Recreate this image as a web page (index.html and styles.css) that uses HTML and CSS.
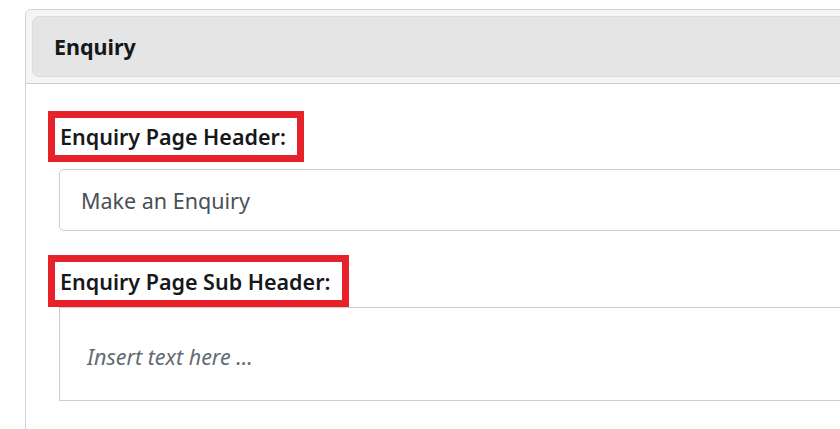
FILE: index.html
```html
<!DOCTYPE html>
<html>
<head>
<meta charset="utf-8">
<link rel="stylesheet" href="styles.css">
</head>
<body>
<div class="card">
  <div class="card-header">
    <div class="header-box"><span class="title">Enquiry</span></div>
  </div>
  <div class="card-body">
    <div class="field">
      <label class="label">Enquiry Page Header:</label>
      <div class="input">Make an Enquiry</div>
    </div>
    <div class="field">
      <label class="label label-tall">Enquiry Page Sub Header:</label>
      <div class="editor"><span class="placeholder">Insert text here ...</span></div>
    </div>
  </div>
</div>
</body>
</html>
```

FILE: styles.css
```css
html, body {
  margin: 0;
  padding: 0;
  background: #ffffff;
  overflow: hidden;
}
body {
  padding-top: 9px;
  font-family: "Noto Sans", "Open Sans", sans-serif;
  color: #212529;
}
.card {
  margin-left: 25px;
  width: 1000px;
  height: 600px;
  border: 1px solid #c8d4da;
  border-radius: 6px 0 0 0;
  box-sizing: border-box;
}
.card-header {
  padding: 6px 6px 6px 6px;
  background: #f4f4f4;
  border-bottom: 1px solid #c3d2d9;
  border-radius: 6px 0 0 0;
}
.header-box {
  height: 59px;
  background: #e5e5e5;
  border: 1px solid #dcdcdc;
  border-radius: 7px;
  padding-left: 21px;
  display: flex;
  align-items: center;
}
.title {
  font-size: 21.5px;
  font-weight: 700;
  color: #15181b;
}
.card-body {
  padding-top: 27px;
  display: flex;
  flex-direction: column;
  gap: 24px;
}
.field {
  display: flex;
  flex-direction: column;
  align-items: flex-start;
}
.label {
  margin-left: 22px;
  border: 7px solid #e62129;
  padding: 0 11px 0 5px;
  height: 37px;
  display: flex;
  align-items: center;
  font-size: 21.5px;
  font-weight: 600;
  color: #16181b;
}
.label-tall {
  height: 38px;
  padding-right: 12px;
}
.input {
  margin-top: 7px;
  margin-left: 33px;
  width: 900px;
  height: 60px;
  border: 1px solid #c7d0d7;
  border-radius: 5px;
  padding-left: 21px;
  display: flex;
  align-items: center;
  font-size: 21.5px;
  color: #495057;
}
.editor {
  margin-left: 33px;
  width: 900px;
  height: 88px;
  padding-top: 4px;
  border: 1px solid #cccccc;
  padding-left: 27px;
  display: flex;
  align-items: center;
  font-size: 21.5px;
}
.placeholder {
  font-style: italic;
  color: #5f6b75;
}
```
